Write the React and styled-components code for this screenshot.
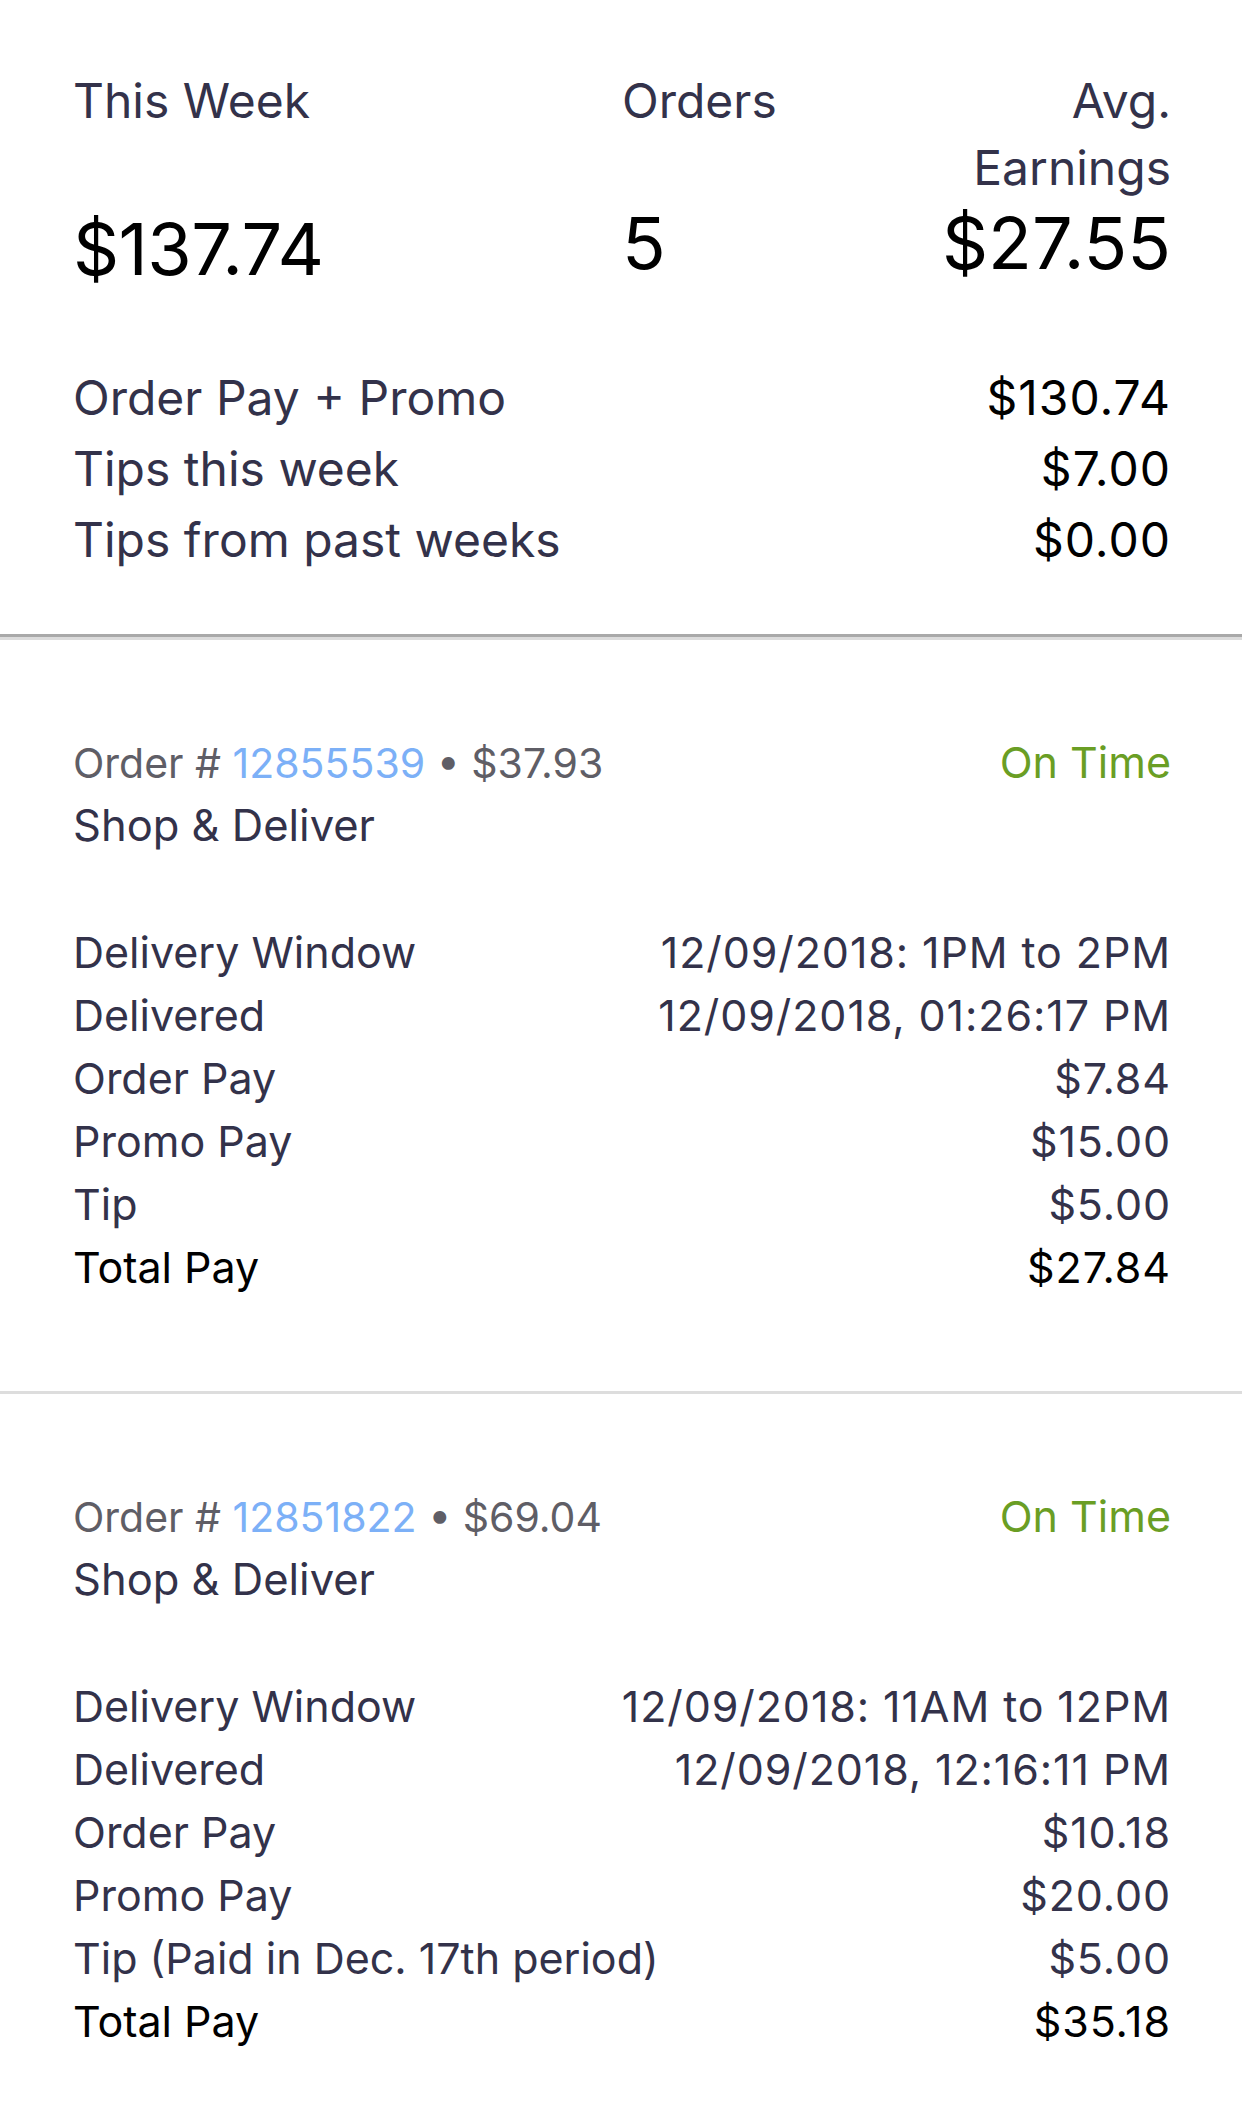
import React from "react";
import styled, { createGlobalStyle } from "styled-components";

const Global = createGlobalStyle`
  html, body { margin: 0; padding: 0; background: #ffffff; }
  body { font-family: Inter, "Noto Sans", "Liberation Sans", sans-serif; -webkit-font-smoothing: antialiased; }
  * { box-sizing: border-box; }
`;

const Page = styled.div`
  width: 1242px;
  background: #fff;
`;

const Summary = styled.section`
  padding: 67px 71px 59px 73px;
`;

const StatGrid = styled.div`
  display: grid;
  grid-template-columns: 549px 1fr 250px;
  grid-template-rows: auto auto;
`;

const StatLabel = styled.div`
  font-size: 48px;
  line-height: 67px;
  color: #33324a;
  text-align: ${(p) => (p.$right ? "right" : "left")};
`;

const StatValue = styled.div`
  font-size: 72px;
  line-height: 84px;
  color: #000;
  text-align: ${(p) => (p.$right ? "right" : "left")};
  margin-top: ${(p) => p.$drop || 0}px;
  letter-spacing: ${(p) => (p.$tight ? "-0.6px" : "0")};
`;

const SumList = styled.div`
  margin-top: 71px;
  display: flex;
  flex-direction: column;
`;

const SumRow = styled.div`
  display: flex;
  justify-content: space-between;
  font-size: 48px;
  line-height: 71px;
  color: #33324a;
`;

const SumAmount = styled.span`
  color: #000;
  letter-spacing: 1px;
`;

const ThickDivider = styled.div`
  height: 0;
  border-top: 3px solid #a9a9a9;
  border-bottom: 3px solid #dcdcdc;
`;

const OrderCard = styled.section`
  padding: 92px 71px 92px 73px;
  border-bottom: ${(p) => (p.$last ? "none" : "3px solid #dddddd")};
`;

const OrderHead = styled.div`
  display: flex;
  justify-content: space-between;
  align-items: baseline;
  font-size: 41px;
  line-height: 60px;
  color: #5f5e66;
`;

const OrderLink = styled.span`
  color: #7cb0f7;
`;

const Status = styled.span`
  color: #6a9e24;
  font-size: 43px;
`;

const OrderType = styled.div`
  font-size: 43.5px;
  line-height: 64px;
  color: #33324a;
`;

const DetailList = styled.div`
  margin-top: 64px;
  display: flex;
  flex-direction: column;
`;

const DetailRow = styled.div`
  display: flex;
  justify-content: space-between;
  font-size: 43px;
  line-height: 63px;
  color: ${(p) => (p.$strong ? "#000" : "#33324a")};
`;

const DetailValue = styled.span`
  letter-spacing: 0.9px;
`;

const orders = [
  {
    id: "12855539",
    amount: "$37.93",
    rows: [
      ["Delivery Window", "12/09/2018: 1PM to 2PM"],
      ["Delivered", "12/09/2018, 01:26:17 PM"],
      ["Order Pay", "$7.84"],
      ["Promo Pay", "$15.00"],
      ["Tip", "$5.00"],
    ],
    total: "$27.84",
  },
  {
    id: "12851822",
    amount: "$69.04",
    rows: [
      ["Delivery Window", "12/09/2018: 11AM to 12PM"],
      ["Delivered", "12/09/2018, 12:16:11 PM"],
      ["Order Pay", "$10.18"],
      ["Promo Pay", "$20.00"],
      ["Tip (Paid in Dec. 17th period)", "$5.00"],
    ],
    total: "$35.18",
  },
];

export default function App() {
  return (
    <Page>
      <Global />
      <Summary>
        <StatGrid>
          <StatLabel>This Week</StatLabel>
          <StatLabel>Orders</StatLabel>
          <StatLabel $right>Avg. Earnings</StatLabel>
          <StatValue $drop={6} $tight>$137.74</StatValue>
          <StatValue>5</StatValue>
          <StatValue $right>$27.55</StatValue>
        </StatGrid>
        <SumList>
          <SumRow>
            <span>Order Pay + Promo</span>
            <SumAmount>$130.74</SumAmount>
          </SumRow>
          <SumRow>
            <span>Tips this week</span>
            <SumAmount>$7.00</SumAmount>
          </SumRow>
          <SumRow>
            <span>Tips from past weeks</span>
            <SumAmount>$0.00</SumAmount>
          </SumRow>
        </SumList>
      </Summary>
      <ThickDivider />
      {orders.map((o, i) => (
        <OrderCard key={o.id} $last={i === orders.length - 1}>
          <OrderHead>
            <span>
              Order # <OrderLink>{o.id}</OrderLink> • {o.amount}
            </span>
            <Status>On Time</Status>
          </OrderHead>
          <OrderType>Shop &amp; Deliver</OrderType>
          <DetailList>
            {o.rows.map(([k, v]) => (
              <DetailRow key={k}>
                <span>{k}</span>
                <DetailValue>{v}</DetailValue>
              </DetailRow>
            ))}
            <DetailRow $strong>
              <span>Total Pay</span>
              <DetailValue>{o.total}</DetailValue>
            </DetailRow>
          </DetailList>
        </OrderCard>
      ))}
    </Page>
  );
}
